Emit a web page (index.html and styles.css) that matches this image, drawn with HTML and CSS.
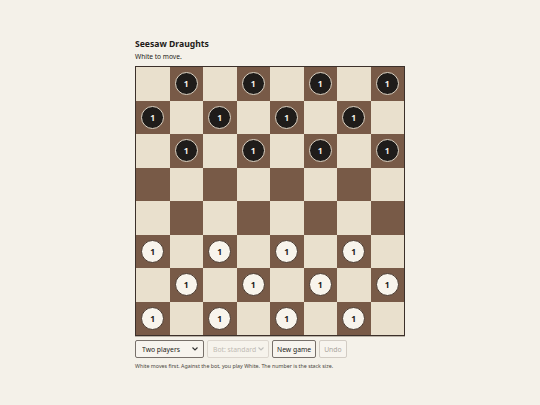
FILE: index.html
```html
<!DOCTYPE html>
<html lang="en">
<head>
    <meta charset="UTF-8">
    <meta name="viewport" content="width=device-width, initial-scale=1.0">
    <title>Seesaw Draughts</title>
    <link rel="stylesheet" href="styles.css">
</head>
<body>
    <div class="game">
        <h1>Seesaw Draughts</h1>
        <p class="status" id="status">White to move.</p>

        <div class="board" id="board"></div>

        <div class="controls">
            <select class="mode">
                <option>Two players</option>
                <option>Versus bot</option>
            </select>
            <select class="level" disabled>
                <option>Bot: standard</option>
            </select>
            <button class="btn">New game</button>
            <button class="btn" disabled>Undo</button>
        </div>

        <p class="hint">White moves first. Against the bot, you play White. The number is the stack size.</p>
    </div>

    <script>
        // build the 8x8 board, pieces on dark squares of the first and last three rows
        const board = document.getElementById('board');
        for (let r = 0; r < 8; r++) {
            for (let c = 0; c < 8; c++) {
                const sq = document.createElement('div');
                const dark = (r + c) % 2 === 1;
                sq.className = 'sq ' + (dark ? 'dark' : 'light');
                if (dark && (r < 3 || r > 4)) {
                    const piece = document.createElement('div');
                    piece.className = 'piece ' + (r < 3 ? 'black' : 'white');
                    piece.textContent = '1';
                    sq.appendChild(piece);
                }
                board.appendChild(sq);
            }
        }
    </script>
</body>
</html>
```

FILE: styles.css
```css
body {
    margin: 0;
    padding-top: 38px;
    background: #f4f1e9;
    font-family: "Noto Sans", sans-serif;
    color: #1d1b18;
}
.game {
    width: 270px;
    margin: 0 auto;
}
h1 {
    font-size: 8.6px;
    font-weight: 700;
    margin: 0;
    line-height: 12px;
}
.status {
    font-size: 6.6px;
    margin: 2px 0 5px;
    line-height: 9px;
}
.board {
    display: grid;
    grid-template-columns: repeat(8, 1fr);
    grid-template-rows: repeat(8, 1fr);
    width: 270px;
    height: 270px;
    box-sizing: border-box;
    border: 1px solid #3b302a;
    box-shadow: 0 1px 0 #b9b2a6;
}
.sq {
    display: flex;
    align-items: center;
    justify-content: center;
}
.light { background: #e9e0cd; }
.dark { background: #785a47; }
.piece {
    width: 21px;
    height: 21px;
    border-radius: 50%;
    display: flex;
    align-items: center;
    justify-content: center;
    font-size: 8.5px;
    font-weight: 700;
}
.black {
    background: #1f1c1a;
    color: #f4efe6;
    border: 1.5px solid #ddd3c3;
}
.white {
    background: #f8f4ec;
    color: #1f1c1a;
    border: 1.5px solid #4a3a30;
}
.controls {
    display: flex;
    gap: 3px;
    margin-top: 4px;
}
select, .btn {
    font-family: "Noto Sans", sans-serif;
    font-size: 6.8px;
    height: 18px;
    border: 1px solid #77706a;
    border-radius: 2px;
    background-color: #f7f4ee;
    color: #1d1b18;
    padding: 0 4px;
}
select {
    appearance: none;
    -webkit-appearance: none;
    padding: 0 10px 0 6px;
    background-image: url("data:image/svg+xml,%3Csvg xmlns='http://www.w3.org/2000/svg' width='6' height='4'%3E%3Cpath d='M0.5 0.5 L3 3 L5.5 0.5' fill='none' stroke='%23333' stroke-width='1.1'/%3E%3C/svg%3E");
    background-repeat: no-repeat;
    background-position: right 5px center;
}
.mode { width: 69px; }
.level {
    width: 62px;
    padding-left: 5px;
    background-image: url("data:image/svg+xml,%3Csvg xmlns='http://www.w3.org/2000/svg' width='6' height='4'%3E%3Cpath d='M0.5 0.5 L3 3 L5.5 0.5' fill='none' stroke='%23aaa' stroke-width='1.1'/%3E%3C/svg%3E");
    background-position: right 4px center;
}
select:disabled, .btn:disabled {
    color: #aaa49c;
    border-color: #d2ccc4;
}
.hint {
    font-size: 5.3px;
    color: #4a4640;
    margin: 4px 0 0;
}
```
